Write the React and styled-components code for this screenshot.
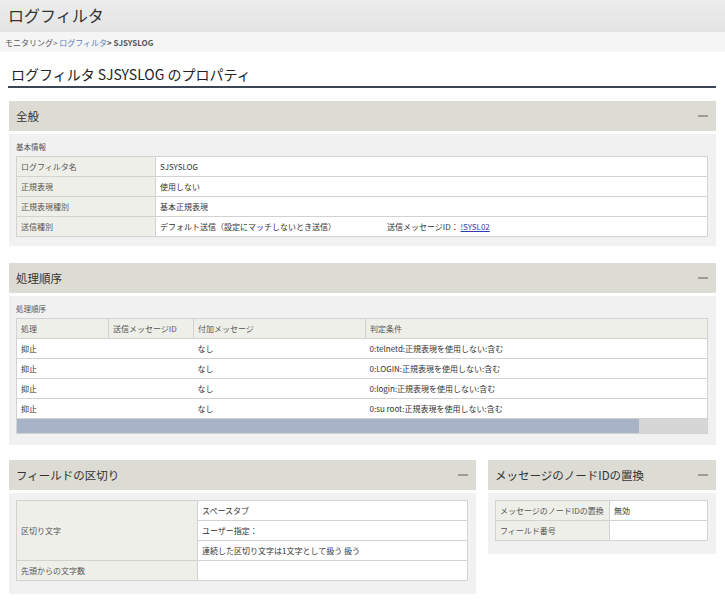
import React from "react";
import styled, { createGlobalStyle } from "styled-components";

const GlobalStyle = createGlobalStyle`
  body {
    margin: 0;
    background: #ffffff;
    font-family: "Noto Sans CJK JP", "Noto Sans", sans-serif;
    color: #333333;
  }
`;

const Page = styled.div`
  width: 725px;
`;

const TopBar = styled.div`
  height: 32px;
  padding: 0 8px 3px;
  box-sizing: border-box;
  display: flex;
  align-items: center;
  background: linear-gradient(#ececec, #e4e4e4);
  font-size: 16px;
  color: #333333;
`;

const Breadcrumb = styled.div`
  height: 20px;
  padding: 0 5px;
  display: flex;
  align-items: center;
  background: #f5f5f5;
  font-size: 8px;
  color: #555555;
`;

const Crumb = styled.span`
  color: ${(p) => (p.$link ? "#5b7fb6" : "#555555")};
  font-weight: ${(p) => (p.$current ? 700 : 400)};
`;

const Content = styled.div`
  padding: 0 9px;
`;

const PageTitle = styled.h1`
  margin: 12px 0 0 -1px;
  padding: 0 0 2px 3px;
  font-size: 14px;
  line-height: 20px;
  font-weight: 400;
  color: #222222;
  border-bottom: 2px solid #3b4758;
`;

const Panel = styled.section`
  margin-top: ${(p) => p.$gap || 0}px;
`;

const PanelHeader = styled.div`
  height: 30px;
  padding: 0 8px 0 7px;
  display: flex;
  align-items: center;
  justify-content: space-between;
  background: #dddcd4;
  font-size: 11.5px;
  color: #333333;
`;

const Minus = styled.span`
  width: 10px;
  height: 2px;
  background: #9c9c90;
`;

const PanelBody = styled.div`
  margin-top: 3px;
  padding: ${(p) => p.$top || 6}px 8px ${(p) => p.$bottom || 9}px 7px;
  background: #f1f1f1;
`;

const SubLabel = styled.div`
  font-size: 7.5px;
  line-height: 14px;
  margin-bottom: 2px;
  color: #555555;
`;

const Table = styled.table`
  width: 100%;
  border-collapse: collapse;
  background: #ffffff;
  font-size: 8px;
  table-layout: fixed;
  border: 1px solid #d2d2d2;
`;

const Cell = styled.td`
  height: 20px;
  box-sizing: border-box;
  padding: 0 4px;
  border: 1px solid #d2d2d2;
  ${(p) => p.$rowOnly && "border-left: 0; border-right: 0;"}
  background: ${(p) => (p.$head ? "#efefe9" : "#ffffff")};
  color: ${(p) => (p.$head ? "#555555" : "#333333")};
  white-space: nowrap;
  overflow: hidden;
`;

const Split = styled.span`
  display: inline-block;
  width: 227px;
`;

const Link = styled.a`
  color: #2f3ea8;
  text-decoration: underline;
`;

const ScrollTrack = styled.div`
  height: 14px;
  background: #d6d6d6;
  border: 1px solid #d2d2d2;
  border-top: 0;
  display: flex;
`;

const ScrollThumb = styled.div`
  width: ${(p) => p.$pct}%;
  background: #a9b3c8;
`;

const Columns = styled.div`
  margin-top: 15px;
  display: grid;
  grid-template-columns: 467px 1fr;
  column-gap: 12px;
  align-items: start;
`;

const PanelTitle = ({ children }) => (
  <PanelHeader>
    <span>{children}</span>
    <Minus />
  </PanelHeader>
);

const rules = [
  "0:telnetd:正規表現を使用しない:含む",
  "0:LOGIN:正規表現を使用しない:含む",
  "0:login:正規表現を使用しない:含む",
  "0:su root:正規表現を使用しない:含む",
];

export default function App() {
  return (
    <Page>
      <GlobalStyle />
      <TopBar>ログフィルタ</TopBar>
      <Breadcrumb>
        <Crumb>モニタリング&gt;&nbsp;</Crumb>
        <Crumb $link>ログフィルタ</Crumb>
        <Crumb $current>&gt;&nbsp;SJSYSLOG</Crumb>
      </Breadcrumb>
      <Content>
        <PageTitle>ログフィルタ SJSYSLOG のプロパティ</PageTitle>

        <Panel $gap={13}>
          <PanelTitle>全般</PanelTitle>
          <PanelBody>
            <SubLabel>基本情報</SubLabel>
            <Table>
              <colgroup>
                <col style={{ width: 139 }} />
                <col />
              </colgroup>
              <tbody>
                <tr>
                  <Cell $head>ログフィルタ名</Cell>
                  <Cell>SJSYSLOG</Cell>
                </tr>
                <tr>
                  <Cell $head>正規表現</Cell>
                  <Cell>使用しない</Cell>
                </tr>
                <tr>
                  <Cell $head>正規表現種別</Cell>
                  <Cell>基本正規表現</Cell>
                </tr>
                <tr>
                  <Cell $head>送信種別</Cell>
                  <Cell>
                    <Split>デフォルト送信（設定にマッチしないとき送信）</Split>
                    送信メッセージID： <Link>!SYSL02</Link>
                  </Cell>
                </tr>
              </tbody>
            </Table>
          </PanelBody>
        </Panel>

        <Panel $gap={17}>
          <PanelTitle>処理順序</PanelTitle>
          <PanelBody $bottom={11}>
            <SubLabel>処理順序</SubLabel>
            <Table>
              <colgroup>
                <col style={{ width: 92 }} />
                <col style={{ width: 85 }} />
                <col style={{ width: 172 }} />
                <col />
              </colgroup>
              <tbody>
                <tr>
                  <Cell $head>処理</Cell>
                  <Cell $head>送信メッセージID</Cell>
                  <Cell $head>付加メッセージ</Cell>
                  <Cell $head>判定条件</Cell>
                </tr>
                {rules.map((r) => (
                  <tr key={r}>
                    <Cell $rowOnly>抑止</Cell>
                    <Cell $rowOnly></Cell>
                    <Cell $rowOnly>なし</Cell>
                    <Cell $rowOnly>{r}</Cell>
                  </tr>
                ))}
              </tbody>
            </Table>
            <ScrollTrack>
              <ScrollThumb $pct={90.2} />
            </ScrollTrack>
          </PanelBody>
        </Panel>

        <Columns>
          <Panel>
            <PanelTitle>フィールドの区切り</PanelTitle>
            <PanelBody $top={7} $bottom={13}>
              <Table>
                <colgroup>
                  <col style={{ width: 181 }} />
                  <col />
                </colgroup>
                <tbody>
                  <tr>
                    <Cell $head rowSpan={3}>
                      区切り文字
                    </Cell>
                    <Cell>スペースタブ</Cell>
                  </tr>
                  <tr>
                    <Cell>ユーザー指定：</Cell>
                  </tr>
                  <tr>
                    <Cell>連続した区切り文字は1文字として扱う 扱う</Cell>
                  </tr>
                  <tr>
                    <Cell $head>先頭からの文字数</Cell>
                    <Cell></Cell>
                  </tr>
                </tbody>
              </Table>
            </PanelBody>
          </Panel>

          <Panel>
            <PanelTitle>メッセージのノードIDの置換</PanelTitle>
            <PanelBody $top={7} $bottom={13}>
              <Table>
                <colgroup>
                  <col style={{ width: 114 }} />
                  <col />
                </colgroup>
                <tbody>
                  <tr>
                    <Cell $head>メッセージのノードIDの置換</Cell>
                    <Cell>無効</Cell>
                  </tr>
                  <tr>
                    <Cell $head>フィールド番号</Cell>
                    <Cell></Cell>
                  </tr>
                </tbody>
              </Table>
            </PanelBody>
          </Panel>
        </Columns>
      </Content>
    </Page>
  );
}
